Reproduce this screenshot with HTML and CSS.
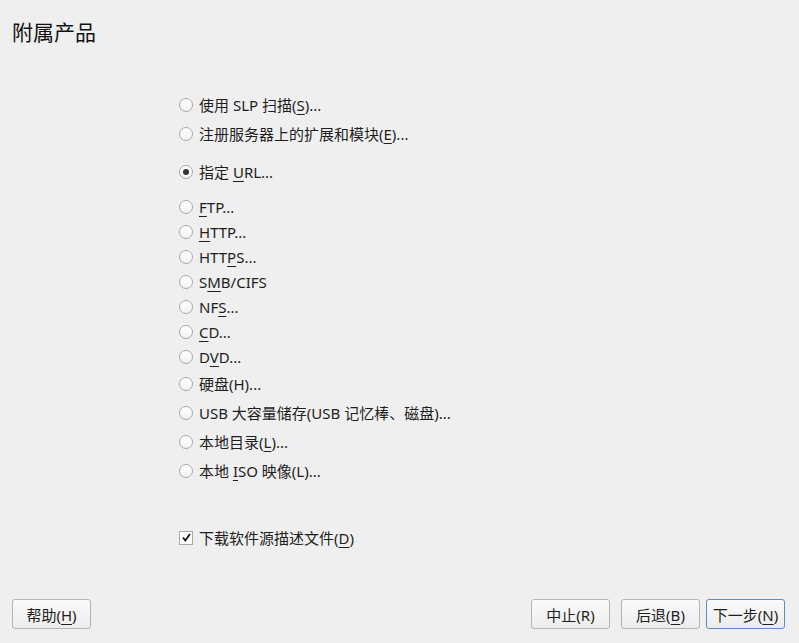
FILE: index.html
```html
<!DOCTYPE html>
<html lang="zh-CN">
<head>
    <meta charset="UTF-8">
    <title>附属产品</title>
    <link rel="stylesheet" href="styles.css">
</head>
<body>
    <div class="dialog">
        <h1 class="title">附属产品</h1>

        <div class="options">
            <label class="row cjk"><span class="radio"></span><span>使用 SLP 扫描(<u>S</u>)...</span></label>
            <label class="row cjk"><span class="radio"></span><span>注册服务器上的扩展和模块(<u>E</u>)...</span></label>
            <label class="row cjk gap"><span class="radio checked"></span><span>指定 <u>U</u>RL...</span></label>

            <div class="sublist">
                <label class="row"><span class="radio"></span><span><u>F</u>TP...</span></label>
                <label class="row"><span class="radio"></span><span><u>H</u>TTP...</span></label>
                <label class="row"><span class="radio"></span><span>HTT<u>P</u>S...</span></label>
                <label class="row"><span class="radio"></span><span>S<u>M</u>B/CIFS</span></label>
                <label class="row"><span class="radio"></span><span>NF<u>S</u>...</span></label>
                <label class="row"><span class="radio"></span><span><u>C</u>D...</span></label>
                <label class="row"><span class="radio"></span><span>D<u>V</u>D...</span></label>
                <label class="row cjk"><span class="radio"></span><span>硬盘(H)...</span></label>
                <label class="row cjk"><span class="radio"></span><span>USB 大容量储存(USB 记忆棒、磁盘)...</span></label>
                <label class="row cjk"><span class="radio"></span><span>本地目录(<u>L</u>)...</span></label>
                <label class="row cjk"><span class="radio"></span><span>本地 <u>I</u>SO 映像(L)...</span></label>
            </div>

            <label class="row cjk download"><span class="checkbox">
                <svg width="11" height="11" viewBox="0 0 11 11"><path d="M2 5.5 L4.3 8.5 L9 2" fill="none" stroke="#111" stroke-width="1.8"/></svg>
            </span><span>下载软件源描述文件(<u>D</u>)</span></label>
        </div>

        <div class="footer">
            <button class="btn">帮助(<u>H</u>)</button>
            <div class="spacer"></div>
            <button class="btn">中止(R)</button>
            <button class="btn back">后退(<u>B</u>)</button>
            <button class="btn primary">下一步(<u>N</u>)</button>
        </div>
    </div>
</body>
</html>
```

FILE: styles.css
```css
body {
    margin: 0;
    background-color: #efefef;
    font-family: "Noto Sans", "Noto Sans CJK SC", sans-serif;
    color: #1e1e1e;
}

.dialog {
    height: 643px;
    display: flex;
    flex-direction: column;
    box-sizing: border-box;
}

.title {
    margin: 0;
    padding: 17px 0 0 12px;
    height: 30px;
    font-size: 21px;
    font-weight: normal;
    line-height: 30px;
    color: #111;
}

.options {
    margin: 43px 0 0 179px;
    display: flex;
    flex-direction: column;
    font-size: 15px;
}

u {
    text-underline-offset: 3px;
    text-decoration-thickness: 1px;
}

.row {
    display: flex;
    align-items: center;
    height: 25px;
    white-space: nowrap;
}

.row.cjk {
    height: 29px;
}

.row.gap {
    margin-top: 9px;
}

.sublist {
    margin-top: 8px;
    display: flex;
    flex-direction: column;
}

.radio {
    width: 12px;
    height: 12px;
    border: 1px solid #a8a8a8;
    border-radius: 50%;
    background: linear-gradient(#ffffff, #f2f2f2);
    margin-right: 6px;
    display: flex;
    align-items: center;
    justify-content: center;
    flex-shrink: 0;
}

.radio.checked::after {
    content: "";
    width: 6px;
    height: 6px;
    border-radius: 50%;
    background-color: #333;
}

.checkbox {
    width: 12px;
    height: 12px;
    border: 1px solid #a8a8a8;
    background: #fff;
    margin-right: 6px;
    display: flex;
    align-items: center;
    justify-content: center;
    flex-shrink: 0;
}

.download {
    margin-top: 38px;
}

.footer {
    margin-top: auto;
    display: flex;
    padding: 0 14px 14px 12px;
}

.spacer {
    flex: 1;
}

.btn {
    width: 79px;
    height: 30px;
    border: 1px solid #b4b4b4;
    border-radius: 3px;
    background: linear-gradient(#fbfbfb, #ececec);
    font-family: "Noto Sans", "Noto Sans CJK SC", sans-serif;
    font-size: 15px;
    color: #1e1e1e;
    padding: 0;
    margin-left: 11px;
}

.footer .btn:first-child {
    margin-left: 0;
}

.btn.primary {
    margin-left: 6px;
    border-color: #5b8dc4;
}
```
